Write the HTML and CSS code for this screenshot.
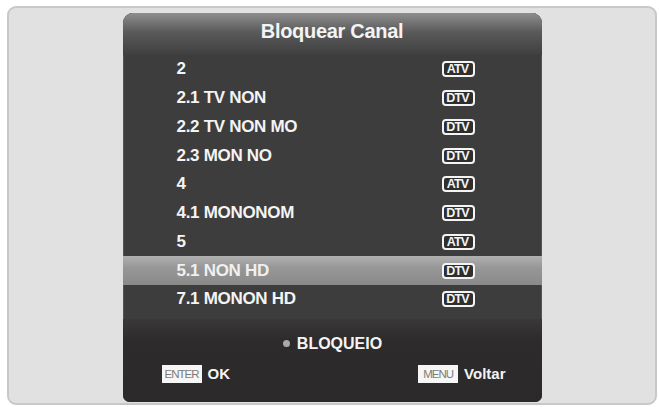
FILE: index.html
```html
<!DOCTYPE html>
<html lang="pt">
<head>
  <meta charset="UTF-8">
  <title>Bloquear Canal</title>
  <link rel="stylesheet" href="styles.css">
</head>
<body>
<div class="frame">
  <div class="panel">
    <div class="header">Bloquear Canal</div>

    <ul class="channels">
      <li class="channel"><span>2</span><span class="badge">ATV</span></li>
      <li class="channel"><span>2.1 TV NON</span><span class="badge">DTV</span></li>
      <li class="channel"><span>2.2 TV NON MO</span><span class="badge">DTV</span></li>
      <li class="channel"><span>2.3 MON NO</span><span class="badge">DTV</span></li>
      <li class="channel"><span>4</span><span class="badge">ATV</span></li>
      <li class="channel"><span>4.1 MONONOM</span><span class="badge">DTV</span></li>
      <li class="channel"><span>5</span><span class="badge">ATV</span></li>
      <li class="channel selected"><span>5.1 NON HD</span><span class="badge">DTV</span></li>
      <li class="channel"><span>7.1 MONON HD</span><span class="badge">DTV</span></li>
    </ul>

    <div class="footer">
      <div class="legend"><span class="dot"></span>BLOQUEIO</div>
      <div class="keys">
        <div class="key"><span class="keycap">ENTER</span>OK</div>
        <div class="key"><span class="keycap">MENU</span>Voltar</div>
      </div>
    </div>
  </div>
</div>
</body>
</html>
```

FILE: styles.css
```css
:root {
  --frame-bg: #e1e1e1;
  --frame-border: #c8c8c8;
  --list-bg: #3d3d3d;
  --footer-bg: #2d2b2c;
  --text-color: #f4f4f4;
}

body {
  margin: 0;
  background: #ffffff;
  font-family: 'Liberation Sans', Arial, sans-serif;
  font-weight: bold;
  color: var(--text-color);
}

.frame {
  margin: 6px 0 0 7px;
  width: 646px;
  height: 390px;
  background: var(--frame-bg);
  border: 2px solid var(--frame-border);
  border-radius: 9px;
  padding-top: 5px;
  box-sizing: content-box;
}

.panel {
  width: 419px;
  margin: 0 auto;
  border-radius: 10px 10px 7px 7px;
  overflow: hidden;
  background: var(--list-bg);
  box-shadow: inset 1px 0 0 #555, inset -1px 0 0 #555;
}

.header {
  height: 42px;
  padding-top: 4px;
  box-sizing: border-box;
  text-align: center;
  font-size: 20px;
  line-height: 28px;
  letter-spacing: -0.3px;
  background: linear-gradient(to bottom, #8e8e8e 0%, #5a5a5a 45%, #3f3f3f 100%);
}

.channels {
  list-style: none;
  margin: 0;
  padding: 0 0 5px 0;
}

.channel {
  display: grid;
  grid-template-columns: 265px auto;
  align-items: center;
  height: 28.75px;
  padding-left: 54px;
  font-size: 17px;
  letter-spacing: -0.3px;
}

.channel.selected {
  background: linear-gradient(to bottom, #b0b0b0 0%, #979797 40%, #8a8a8a 100%);
  color: #f0f0f0;
}

.badge {
  justify-self: start;
  width: 29px;
  height: 12px;
  border: 2px solid #f4f4f4;
  border-radius: 4px;
  background: #2e2e2e;
  font-size: 12.5px;
  line-height: 12px;
  text-align: center;
  letter-spacing: -0.9px;
  text-indent: -1px;
  color: #f4f4f4;
}

.footer {
  height: 83px;
  background: linear-gradient(to bottom, #3a3839 0%, #2d2b2c 25%, #2b292a 100%);
  display: flex;
  flex-direction: column;
  padding-top: 15px;
  box-sizing: border-box;
}

.legend {
  display: flex;
  align-items: center;
  justify-content: center;
  gap: 7px;
  font-size: 16px;
  height: 20px;
  padding-left: 1px;
}

.dot {
  width: 7px;
  height: 7px;
  border-radius: 50%;
  background: #a9a9a9;
}

.keys {
  display: flex;
  justify-content: space-between;
  margin-top: 11px;
  padding: 0 36px 0 39px;
}

.key {
  display: flex;
  align-items: center;
  gap: 6px;
  font-size: 15px;
}

.keycap {
  background: #f6f6f6;
  color: #7c7c7c;
  font-size: 11.5px;
  font-weight: normal;
  letter-spacing: -1px;
  padding: 0 3px;
  height: 18px;
  line-height: 18px;
  min-width: 34px;
  text-align: center;
}
```
